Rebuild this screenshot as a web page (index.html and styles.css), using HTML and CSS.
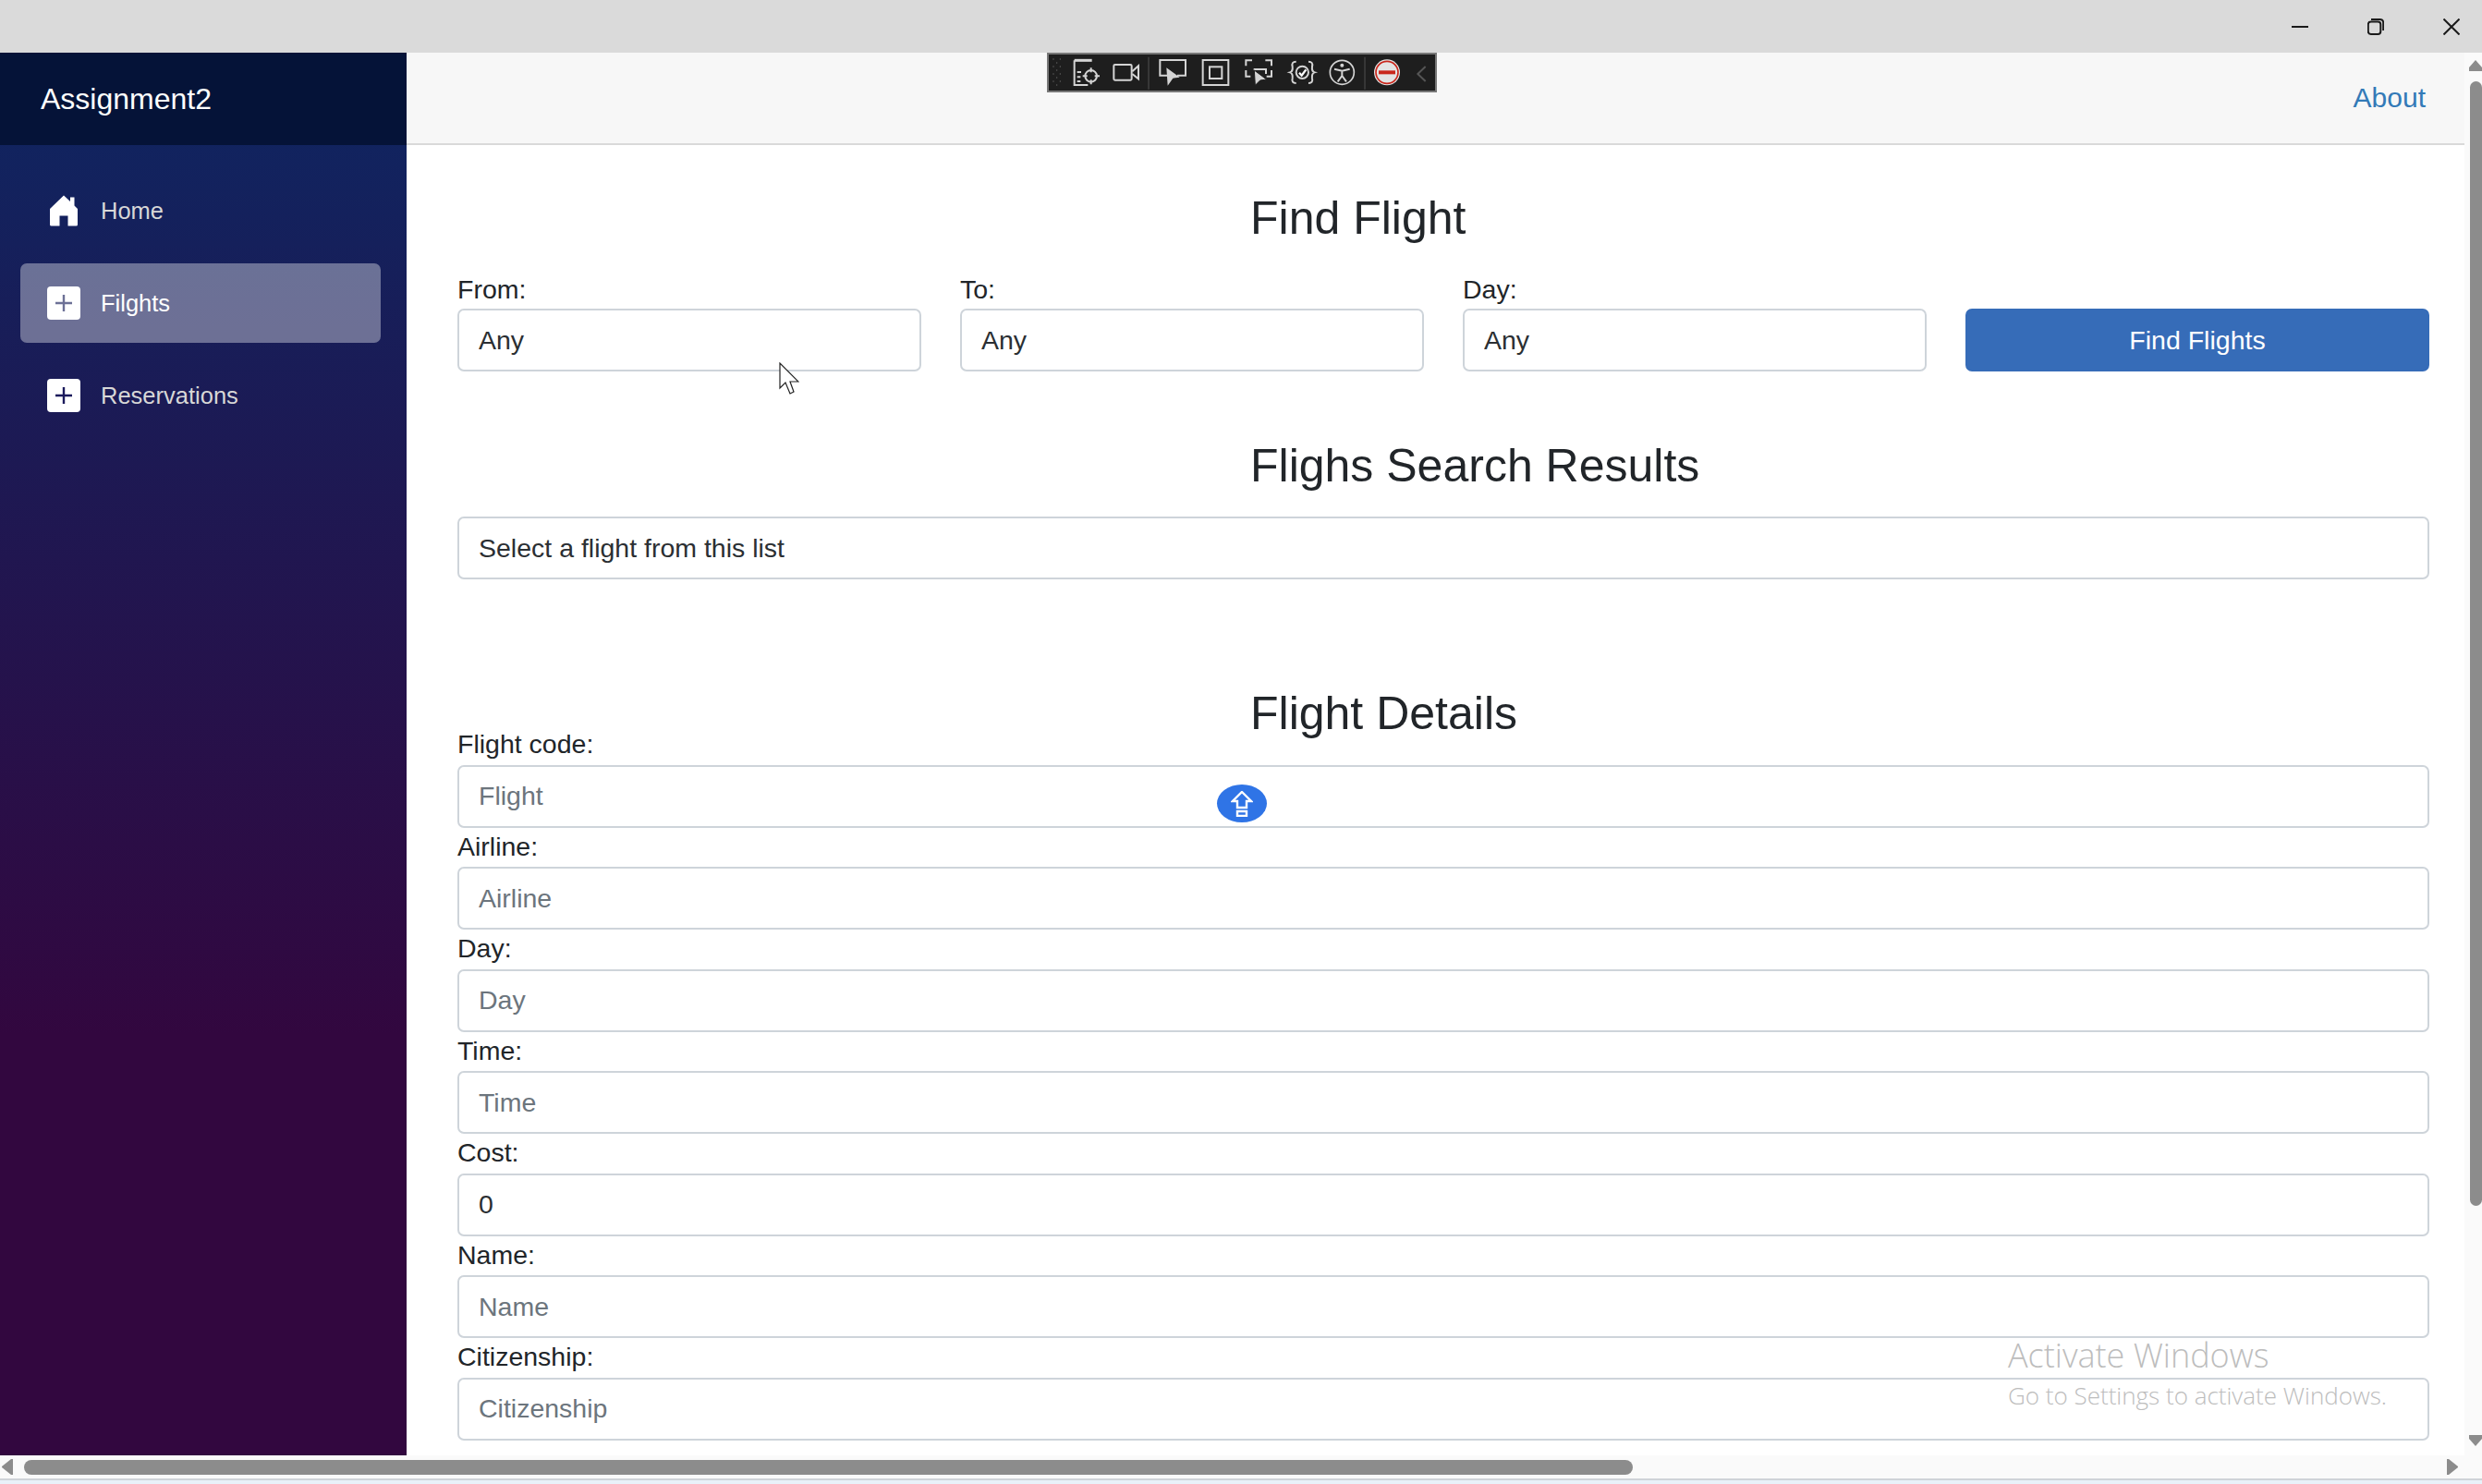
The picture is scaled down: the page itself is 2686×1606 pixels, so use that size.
FILE: index.html
```html
<!DOCTYPE html>
<html lang="en">

<head>
    <meta charset="UTF-8">
    <title>Assignment2</title>
    <link rel="stylesheet" href="styles.css">
</head>

<body>
    <!-- window title bar -->
    <div class="titlebar">
        <svg class="winbtn" viewBox="0 0 18 18"><path d="M0 9H18" /></svg>
        <svg class="winbtn" viewBox="0 0 18 18"><rect x="0.8" y="3.5" width="13.5" height="13.5" rx="3" /><path d="M4 1H13.5Q17.2 1 17.2 4.7V13" /></svg>
        <svg class="winbtn" viewBox="0 0 18 18"><path d="M0.5 0.5L17.5 17.5M17.5 0.5L0.5 17.5" /></svg>
    </div>

    <div class="app">
        <div class="sidebar">
            <div class="brand">Assignment2</div>
            <div class="nav">
                <a class="nav-item">
                    <svg class="nav-icon" viewBox="0 0 36 36"><path d="M18 1.5L25 8V3.5H29.5V12.5L33 16V33Q33 34.500 31.500 34.500H22.500V23.500H13.500V34.500H4.500Q3 34.500 3 33V16Z" fill="#fff" /></svg>
                    Home
                </a>
                <a class="nav-item active">
                    <svg class="nav-icon" viewBox="0 0 36 36"><rect width="36" height="36" rx="4" fill="#fff" /><path d="M18 9V27M9 18H27" stroke="#6d7196" stroke-width="2.400" /></svg>
                    Filghts
                </a>
                <a class="nav-item">
                    <svg class="nav-icon" viewBox="0 0 36 36"><rect width="36" height="36" rx="4" fill="#fff" /><path d="M18 9V27M9 18H27" stroke="#1b1a5c" stroke-width="2.400" /></svg>
                    Reservations
                </a>
            </div>
        </div>

        <div class="main">
            <div class="topbar"><a class="about">About</a></div>

            <div class="content">
                <h1 class="heading first">Find Flight</h1>
                <div class="search-row">
                    <div class="col">
                        <label>From:</label>
                        <select class="control"><option>Any</option></select>
                    </div>
                    <div class="col">
                        <label>To:</label>
                        <select class="control"><option>Any</option></select>
                    </div>
                    <div class="col">
                        <label>Day:</label>
                        <select class="control"><option>Any</option></select>
                    </div>
                    <div class="col">
                        <label>&nbsp;</label>
                        <button class="find-btn">Find Flights</button>
                    </div>
                </div>

                <h1 class="heading second">Flighs Search Results</h1>
                <select class="control"><option>Select a flight from this list</option></select>

                <h1 class="heading third">Flight Details</h1>
                <div class="field"><label>Flight code:</label><input class="control" placeholder="Flight"></div>
                <div class="field"><label>Airline:</label><input class="control" placeholder="Airline"></div>
                <div class="field"><label>Day:</label><input class="control" placeholder="Day"></div>
                <div class="field"><label>Time:</label><input class="control" placeholder="Time"></div>
                <div class="field"><label>Cost:</label><input class="control" value="0"></div>
                <div class="field"><label>Name:</label><input class="control" placeholder="Name"></div>
                <div class="field"><label>Citizenship:</label><input class="control" placeholder="Citizenship"></div>
            </div>
        </div>

        <div class="vscroll">
            <svg class="arrow-up" viewBox="0 0 14 12"><path d="M7 0L14 8V12H0V8Z" /></svg>
            <div class="vthumb"></div>
            <svg class="arrow-down" viewBox="0 0 14 12"><path d="M0 0H14V4L7 12L0 4Z" /></svg>
        </div>
    </div>

    <div class="hscroll">
        <svg class="arrow-side" viewBox="0 0 12 17"><path d="M12 0V17H10L0 9V8L10 0Z" /></svg>
        <div class="hthumb"></div>
        <svg class="arrow-side" viewBox="0 0 12 17"><path d="M0 0V17H2L12 9V8L2 0Z" /></svg>
    </div>
    <div class="desktop"></div>

    <!-- floating capture toolbar -->
    <div class="toolbar">
        <svg viewBox="45 27 1254 117" width="418" height="39">
            <g fill="#666">
                <circle cx="60" cy="42" r="2" /><circle cx="82" cy="42" r="2" /><circle cx="71" cy="54" r="2" />
                <circle cx="60" cy="66" r="2" /><circle cx="82" cy="66" r="2" /><circle cx="71" cy="78" r="2" />
                <circle cx="60" cy="90" r="2" /><circle cx="82" cy="90" r="2" /><circle cx="71" cy="102" r="2" />
                <circle cx="60" cy="114" r="2" /><circle cx="82" cy="114" r="2" /><circle cx="71" cy="126" r="2" />
            </g>
            <g fill="none" stroke="#d4d4d4" stroke-width="6">
                <path d="M128 46H185" stroke-width="9" />
                <path d="M128 46V126H172M137 84H150M137 100H148M137 114H148" />
                <circle cx="182" cy="97" r="19" />
                <path d="M182 70V85M182 109V124M155 97H170M194 97H210" />
                <rect x="256" y="60" width="58" height="50" rx="4" />
                <path d="M316 82L336 64V106L316 90" />
                <path d="M433 95H406V45H489V95H462" />
                <rect x="545" y="45" width="83" height="81" />
                <rect x="567" y="67" width="40" height="38" />
                <path d="M705 46H685V64M748 46H768V64M685 78V98H700M768 78V98H752" />
                <path d="M710 75H750V90" />
                <path d="M848 50Q832 50 836 66Q838 82 828 85Q838 88 836 104Q832 120 848 120M888 50Q904 50 900 66Q898 82 908 85Q898 88 900 104Q904 120 888 120" />
                <circle cx="868" cy="85" r="20" />
                <path d="M858 86L866 95L880 76" stroke="#fff" stroke-width="7" />
                <circle cx="997" cy="85" r="39" stroke-width="5" />
                <circle cx="997" cy="62" r="6" fill="#d4d4d4" stroke="none" />
                <path d="M972 74L997 80L1022 74M997 80V96L983 115M997 96L1011 115" />
            </g>
            <path d="M427 70L470 101L448 104L431 128Z" fill="#d4d4d4" />
            <path d="M712 78L752 108L731 111L715 127Z" fill="#d4d4d4" stroke="#1e1e1e" stroke-width="3" />
            <path d="M369 35V140M1071 35V140" stroke="#444" stroke-width="4" />
            <circle cx="1143" cy="85" r="42" fill="#e4e4e4" />
            <circle cx="1143" cy="85" r="36" fill="none" stroke="#c9281d" stroke-width="5" />
            <path d="M1116 85H1170" stroke="#c9281d" stroke-width="12" />
            <path d="M1268 66L1243 90L1268 114" fill="none" stroke="#555" stroke-width="6" />
        </svg>
    </div>

    <!-- things lying over the form -->
    <svg class="pointer" viewBox="0 0 22 35"><path d="M1 1V28L7 22L12 34L16 32L12 21H21Z" fill="#fff" stroke="#222" stroke-width="1.200" /></svg>

    <div class="float-btn">
        <svg viewBox="0 0 24 28" width="24" height="28"><path d="M12 1L22 11H17V18H7V11H2Z M7 22H17V27H7Z" fill="none" stroke="#fff" stroke-width="2.400" /></svg>
    </div>

    <div class="watermark">
        <div class="wm-title">Activate Windows</div>
        <div class="wm-sub">Go to Settings to activate Windows.</div>
    </div>
</body>

</html>
```

FILE: styles.css
```css
* {
    margin: 0;
    padding: 0;
    box-sizing: border-box;
}

html,
body {
    width: 2686px;
    height: 1606px;
    overflow: hidden;
}

body {
    font-family: "Liberation Sans", Arial, sans-serif;
    font-size: 28.5px;
    color: #212529;
    background-color: #fff;
    display: flex;
    flex-direction: column;
}

/* title bar */
.titlebar {
    height: 57px;
    background-color: #dadada;
    display: flex;
    justify-content: flex-end;
    align-items: center;
    gap: 64px;
    padding: 0 24px 0 0;
}

.winbtn {
    width: 18px;
    height: 18px;
    fill: none;
    stroke: #1a1a1a;
    stroke-width: 2;
}

.app {
    height: 1518px;
    display: flex;
}

/* sidebar */
.sidebar {
    width: 440px;
    background-image: linear-gradient(180deg, #0e2662 0%, #32073f 70%);
}

.brand {
    height: 100px;
    background-color: #051338;
    color: #fff;
    font-size: 32px;
    line-height: 100px;
    padding-left: 44px;
}

.nav {
    padding: 28px 28px 0 22px;
    display: flex;
    flex-direction: column;
    gap: 14px;
}

.nav-item {
    height: 86px;
    display: flex;
    align-items: center;
    padding-left: 29px;
    border-radius: 7px;
    font-size: 25.5px;
    color: #d7d7d7;
}

.nav-item.active {
    background-color: rgba(255, 255, 255, 0.37);
    color: #fff;
}

.nav-icon {
    width: 36px;
    height: 36px;
    margin-right: 22px;
}

/* main column */
.main {
    flex: 1;
    min-width: 0;
}

.topbar {
    height: 100px;
    background-color: #f7f7f7;
    border-bottom: 2px solid #d9d9d9;
    display: flex;
    justify-content: flex-end;
    align-items: center;
    padding-right: 42px;
}

.about {
    color: #337ab7;
    font-size: 30px;
}

.content {
    padding: 0 38px 0 55px;
}

.heading {
    height: 60px;
    line-height: 60px;
    font-size: 50px;
    font-weight: 400;
    padding-left: 858px;
}

.heading.first {
    margin: 49px 0 26px;
}

.heading.second {
    margin: 72px 0 25px;
}

.heading.third {
    margin: 115px 0 -17px;
}

.search-row {
    display: flex;
    gap: 42px;
}

.col {
    flex: 1;
    min-width: 0;
}

label {
    display: block;
    height: 42px;
    line-height: 42px;
}

.control {
    display: block;
    width: 100%;
    height: 68px;
    padding: 0 21px;
    font-family: inherit;
    font-size: 28.5px;
    color: #2b2f33;
    background-color: #fff;
    border: 2px solid #ced4da;
    border-radius: 7px;
    outline: none;
    appearance: none;
}

.control::placeholder {
    color: #6c757d;
    opacity: 1;
}

.find-btn {
    display: block;
    width: 100%;
    height: 68px;
    font-family: inherit;
    font-size: 28.5px;
    color: #fff;
    background-color: #366cb8;
    border: 2px solid #366cb8;
    border-radius: 7px;
}

.field {
    height: 110.500px;
}

.field label {
    height: 42.500px;
    line-height: 40.500px;
}

/* scrollbars */
.vscroll {
    width: 19px;
    background-color: #fafafa;
    display: flex;
    flex-direction: column;
    align-items: flex-end;
    padding-top: 8px;
}

.arrow-up,
.arrow-down {
    width: 14px;
    height: 12px;
    fill: #8c8c8c;
}

.vthumb {
    width: 13px;
    height: 1217px;
    margin-top: 11px;
    background-color: #8c8c8c;
    border-radius: 7px;
}

.arrow-down {
    margin-top: 248px;
}

.hscroll {
    height: 25px;
    background-color: #fafafa;
    display: flex;
    align-items: center;
    padding: 0 26px 0 2px;
}

.arrow-side {
    width: 12px;
    height: 17px;
    fill: #8c8c8c;
}

.hthumb {
    width: 1741px;
    height: 16px;
    margin: 0 auto 0 12px;
    background-color: #8c8c8c;
    border-radius: 8px;
}

.desktop {
    flex: 1;
    border-top: 2px solid #cfd3d8;
    background-color: #e9f1f9;
}

/* overlays */
.toolbar {
    position: absolute;
    left: 1133px;
    top: 57px;
    width: 422px;
    height: 43px;
    background-color: #1e1e1e;
    border: 2px solid #777;
    display: flex;
    overflow: hidden;
}

.pointer {
    position: absolute;
    left: 843px;
    top: 392px;
    width: 22px;
    height: 35px;
}

.float-btn {
    position: absolute;
    left: 1317px;
    top: 849px;
    width: 54px;
    height: 41px;
    border-radius: 50%;
    background-color: #2f74e6;
    display: flex;
    align-items: center;
    justify-content: center;
}

.watermark {
    position: absolute;
    left: 2173px;
    top: 1442px;
    font-family: "Open Sans", sans-serif;
    font-weight: 300;
    color: #bdbdbd;
}

.wm-title {
    font-size: 36px;
    line-height: 50px;
}

.wm-sub {
    font-size: 26px;
    line-height: 36px;
}
```
